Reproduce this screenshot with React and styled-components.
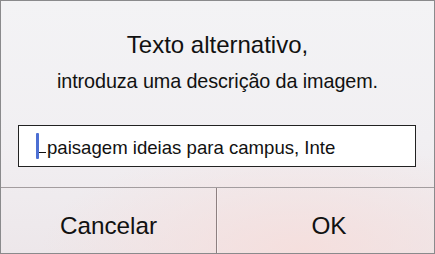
import React from 'react'
import styled, { createGlobalStyle } from 'styled-components'

const Global = createGlobalStyle`
  html, body {
    margin: 0;
    padding: 0;
    background: #f2f2f4;
  }
`

const Dialog = styled.div`
  box-sizing: border-box;
  width: 435px;
  height: 254px;
  border: 1px solid #8a8a8c;
  display: flex;
  flex-direction: column;
  font-family: "Liberation Sans", Arial, sans-serif;
  color: #111;
  background:
    radial-gradient(ellipse 260px 110px at 300px 250px, rgba(246, 222, 220, 0.9), rgba(246, 222, 220, 0) 100%),
    linear-gradient(to bottom, #f3f3f5 0%, #f1eff2 55%, #ede7ea 100%);
`

const Title = styled.div`
  margin-top: 30px;
  text-align: center;
  font-size: 24px;
  line-height: 28px;
`

const Subtitle = styled.div`
  margin-top: 10px;
  text-align: center;
  font-size: 19.8px;
  line-height: 24px;
  letter-spacing: -0.1px;
`

const Field = styled.div`
  box-sizing: border-box;
  margin: 32px 18px 0 17px;
  height: 42px;
  border: 1px solid #222;
  background: #fff;
  display: flex;
  align-items: flex-start;
  padding: 7px 0 0 17px;
`

const Caret = styled.span`
  position: relative;
  display: block;
  width: 3px;
  height: 26px;
  border-radius: 1px;
  background: #4c6fd3;
  flex: none;

  &::after {
    content: '';
    position: absolute;
    left: 3px;
    top: 19px;
    width: 7px;
    height: 1px;
    background: #111;
  }
`

const Value = styled.span`
  margin: 4px 0 0 8px;
  font-size: 18.6px;
  line-height: 22px;
  white-space: nowrap;
`

const Footer = styled.div`
  margin-top: 20px;
  flex: 1;
  display: grid;
  grid-template-columns: 216px 1fr;
  border-top: 1px solid #a39d9f;
`

const Button = styled.div`
  box-sizing: border-box;
  text-align: center;
  font-size: 24.3px;
  line-height: 28px;
  padding-top: 24px;
  padding-left: ${p => (p.$right ? '6px' : '0')};
  border-right: ${p => (p.$right ? 'none' : '1px solid #8d7f80')};
  border-left: ${p => (p.$right ? '1px solid #f8eeee' : 'none')};
`

export default function App() {
  return (
    <>
      <Global />
      <Dialog>
        <Title>Texto alternativo,</Title>
        <Subtitle>introduza uma descrição da imagem.</Subtitle>
        <Field>
          <Caret />
          <Value>paisagem ideias para campus, Inte</Value>
        </Field>
        <Footer>
          <Button>Cancelar</Button>
          <Button $right>OK</Button>
        </Footer>
      </Dialog>
    </>
  )
}
